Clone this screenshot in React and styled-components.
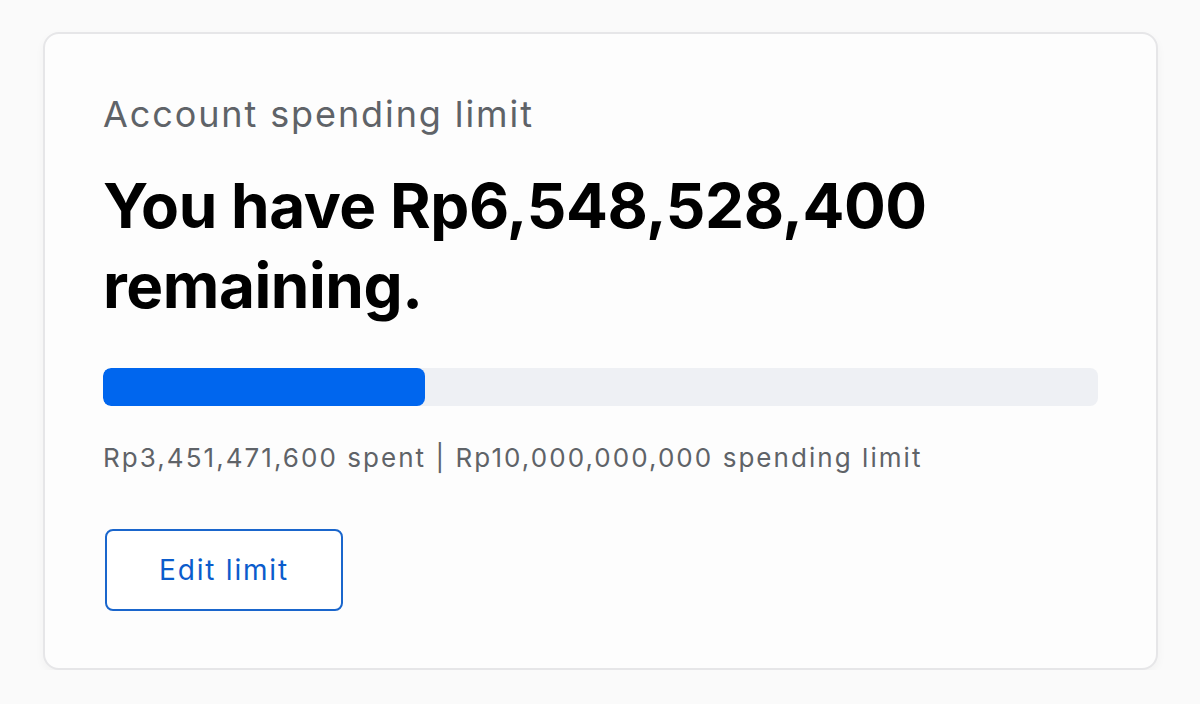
import React from "react"
import styled, { createGlobalStyle } from "styled-components"

const GlobalStyle = createGlobalStyle`
  body {
    margin: 0;
    background: #fafafa;
    font-family: Inter, "Noto Sans", sans-serif;
  }
`

const Page = styled.div`
  padding: 32px 42px 0 43px;
`

const Card = styled.section`
  background: #fdfdfd;
  border: 2px solid #e6e6e8;
  border-radius: 16px;
  box-shadow: 0 4px 10px rgba(0, 0, 0, 0.04);
  padding: 60px 58px 56px 58px;
  height: 638px;
  box-sizing: border-box;
`

const Label = styled.div`
  font-size: 36px;
  letter-spacing: 1.9px;
  color: #5f6368;
  line-height: 40px;
`

const Heading = styled.h1`
  margin: 32px 0 0;
  font-size: 62px;
  font-weight: 700;
  line-height: 80px;
  color: #000;
  letter-spacing: -0.45px;
`

const Track = styled.div`
  margin-top: 42px;
  height: 38px;
  border-radius: 8px;
  background: #eef0f4;
  overflow: hidden;
`

const Fill = styled.div`
  height: 100%;
  border-radius: 8px;
  background: #0066ee;
`

const Summary = styled.div`
  margin-top: 36px;
  font-size: 26px;
  letter-spacing: 2.05px;
  line-height: 32px;
  color: #5f6368;
`

const EditButton = styled.button`
  margin-top: 55px;
  margin-left: 2px;
  width: 238px;
  height: 82px;
  border: 2px solid #1a66cc;
  border-radius: 8px;
  background: #fff;
  color: #0b5ccc;
  font-family: inherit;
  font-size: 28px;
  letter-spacing: 1.8px;
  cursor: pointer;
`

// share of the limit already used, as drawn on the bar
const used = 0.324

export default function App() {
  return (
    <>
      <GlobalStyle />
      <Page>
        <Card>
          <Label>Account spending limit</Label>
          <Heading>
            You have Rp6,548,528,400
            <br />
            remaining.
          </Heading>
          <Track>
            <Fill style={{ width: `${used * 100}%` }} />
          </Track>
          <Summary>Rp3,451,471,600 spent | Rp10,000,000,000 spending limit</Summary>
          <EditButton>Edit limit</EditButton>
        </Card>
      </Page>
    </>
  )
}
